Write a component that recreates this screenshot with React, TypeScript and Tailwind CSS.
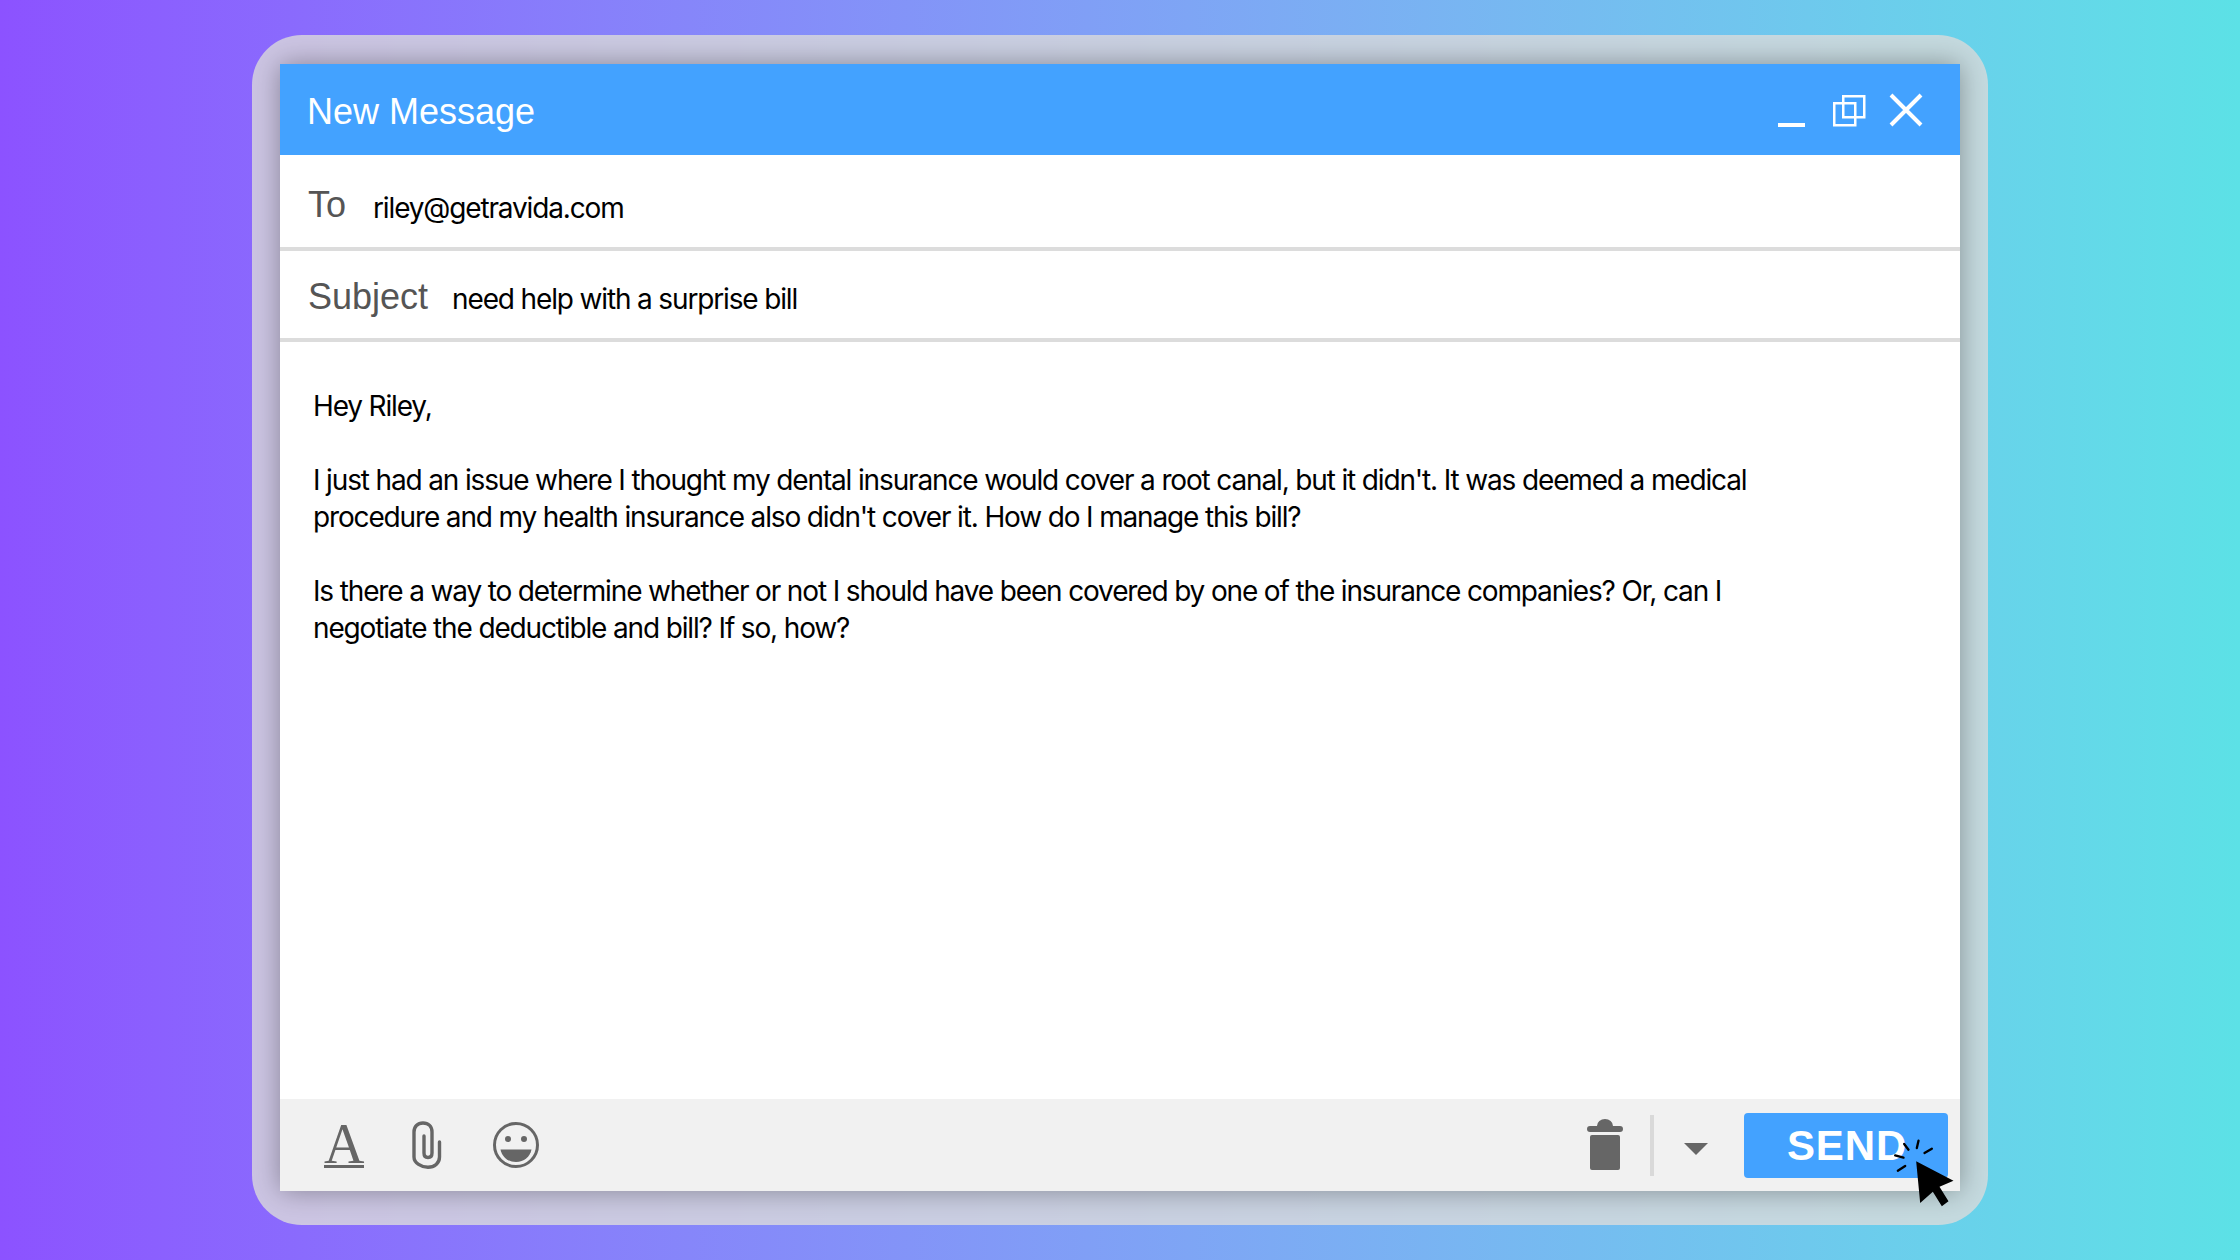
const sans = "font-['Liberation_Sans',Arial,sans-serif]";
const body = "font-['Inter',sans-serif] text-[28px] tracking-[-0.041em] text-black";

const paragraphs = [
  ["Hey Riley,"],
  [
    "I just had an issue where I thought my dental insurance would cover a root canal, but it didn't. It was deemed a medical",
    "procedure and my health insurance also didn't cover it. How do I manage this bill?",
  ],
  [
    "Is there a way to determine whether or not I should have been covered by one of the insurance companies? Or, can I",
    "negotiate the deductible and bill? If so, how?",
  ],
];

function WindowControls() {
  return (
    <div className="flex items-center text-white">
      <svg width="28" height="34" viewBox="0 0 28 34" fill="currentColor">
        <rect x="0" y="30" width="27" height="4" />
      </svg>
      <svg className="ml-[27px]" width="33" height="34" viewBox="0 0 33 34" fill="none" stroke="currentColor" strokeWidth="2.5">
        <rect x="10.25" y="3.25" width="21" height="21" />
        <rect x="1.25" y="10.25" width="21" height="22" />
      </svg>
      <svg className="ml-[23px]" width="34" height="34" viewBox="0 0 34 34" fill="none" stroke="currentColor" strokeWidth="4">
        <path d="M2 2l30 30M32 2L2 32" />
      </svg>
    </div>
  );
}

function Paperclip() {
  return (
    <svg width="30" height="48" viewBox="0 0 30 48" fill="none" stroke="#666" strokeWidth="3.4" strokeLinecap="round">
      <path d="M27.500 21v15c0 6-5 10.300-11.500 10.300S2 42 2 36V11C2 5.500 5.500 2 11 2s9 3.500 9 9v21c0 3-1.800 4.500-4 4.500S12 35 12 32V15" />
    </svg>
  );
}

function Smiley() {
  return (
    <svg width="46" height="46" viewBox="0 0 46 46" fill="#666">
      <circle cx="23" cy="23" r="21.500" fill="none" stroke="#666" strokeWidth="3" />
      <circle cx="15" cy="17" r="3" />
      <circle cx="31" cy="17" r="3" />
      <path d="M7.500 27.500h31C37 35 31 40 23 40S9 35 7.500 27.500z" />
    </svg>
  );
}

function Trash() {
  return (
    <svg width="36" height="52" viewBox="0 0 36 52" fill="#666">
      <path d="M10 7a8 7 0 0 1 16 0h7a3 3 0 0 1 0 6H3a3 3 0 0 1 0-6z" />
      <rect x="3" y="16" width="30" height="35" rx="2" />
    </svg>
  );
}

function ClickCursor() {
  return (
    <svg className="absolute left-[146px] top-[25px]" width="67" height="70" viewBox="0 0 200 210">
      <g stroke="#000" strokeWidth="7" strokeLinecap="round">
        <path d="M42 18l13 17M85 8l-5 22M125 32l-22 13M15 52l25 7M23 98l22-14" />
      </g>
      <path d="M78 70l112 58-42 18 27 44-20 15-27-44-38 34z" fill="#000" />
    </svg>
  );
}

export default function App() {
  return (
    <div className="flex h-[1260px] w-[2240px] items-start justify-center overflow-hidden bg-gradient-to-r from-[#8c52ff] to-[#5ce1e6] pt-[35px]">
      <div className="h-[1190px] w-[1736px] overflow-hidden rounded-[50px] bg-[#dcdcdc]/80 px-[28px] pb-[34px] pt-[29px]">
        <div className={`flex h-full flex-col bg-white shadow-[0_0_26px_rgba(0,0,0,0.34)] ${sans}`}>
          <header className="flex h-[91px] shrink-0 items-center justify-between bg-[#43a2ff] pl-[27px] pr-[37px]">
            <h1 className="pt-[5px] text-[36px] font-normal text-white">New Message</h1>
            <WindowControls />
          </header>

          <div className="flex h-[96px] shrink-0 items-baseline gap-[27px] border-b-4 border-[#dcdcdc] pl-[28px] pt-[23px]">
            <span className="text-[36px] text-[#555]">To</span>
            <span className={`translate-y-px ${body}`}>riley@getravida.com</span>
          </div>
          <div className="flex h-[91px] shrink-0 items-baseline gap-[24px] border-b-4 border-[#dcdcdc] pl-[28px] pt-[19px]">
            <span className="text-[36px] text-[#555]">Subject</span>
            <span className={body}>need help with a surprise bill</span>
          </div>

          <main className={`flex-1 pl-[33px] pt-[46px] leading-[37px] ${body}`}>
            {paragraphs.map((lines, i) => (
              <p key={i} className="mb-[37px] whitespace-nowrap">
                {lines.map((line, j) => (
                  <span key={j} className="block">
                    {line}
                  </span>
                ))}
              </p>
            ))}
          </main>

          <footer className="flex h-[92px] shrink-0 items-center bg-[#f1f1f1] pl-[44px] pr-[12px]">
            <div className="flex flex-col items-center">
              <span className="font-['Liberation_Serif',serif] text-[56px] leading-[42px] text-[#666]">A</span>
              <span className="h-[3px] w-[40px] bg-[#666]" />
            </div>
            <div className="ml-[48px]">
              <Paperclip />
            </div>
            <div className="ml-[51px]">
              <Smiley />
            </div>
            <div className="ml-auto">
              <Trash />
            </div>
            <div className="ml-[27px] h-[61px] w-[4px] bg-[#d9d9d9]" />
            <svg className="ml-[30px] mt-[8px]" width="24" height="12" viewBox="0 0 24 12" fill="#666">
              <path d="M0 0h24L12 12z" />
            </svg>
            <div className="relative ml-[36px] flex h-[65px] w-[204px] items-center rounded-[4px] bg-[#43a2ff] pl-[43px]">
              <span className="pt-[2px] text-[42px] font-bold leading-none tracking-[0.02em] text-white">SEND</span>
              <ClickCursor />
            </div>
          </footer>
        </div>
      </div>
    </div>
  );
}
